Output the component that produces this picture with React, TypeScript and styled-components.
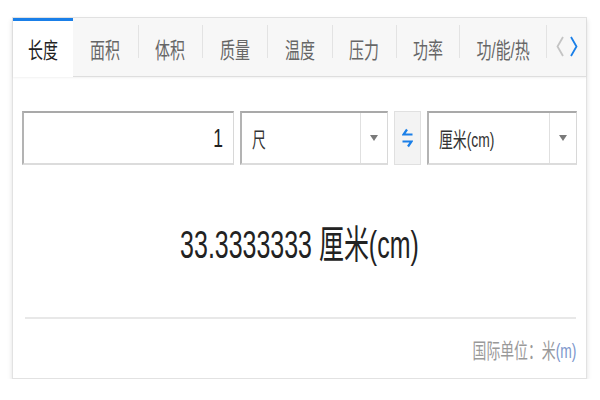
import { Fragment } from "react";
import styled, { createGlobalStyle } from "styled-components";

const GlobalStyle = createGlobalStyle`
    body {
        margin: 0;
        background: #fff;
        font-family: "Liberation Sans", "Noto Sans CJK SC", sans-serif;
    }
`;

const Page = styled.div`
    padding: 17px 0 0 12px;
`;

const Card = styled.div`
    width: 575px;
    height: 362px;
    box-sizing: border-box;
    border: 1px solid #e2e2e2;
    box-shadow: 0 3px 5px rgba(0, 0, 0, 0.12);
    display: flex;
    flex-direction: column;
    background: #fff;
`;

const TabBar = styled.div`
    display: flex;
    height: 61px;
    box-sizing: border-box;
    background: #f7f7f7;
    border-bottom: 1px solid #dedede;
    box-shadow: 0 1px 2px rgba(0, 0, 0, 0.06);
`;

const Tab = styled.div<{ $active?: boolean; $width: number }>`
    width: ${(p) => p.$width}px;
    flex-shrink: 0;
    box-sizing: border-box;
    display: flex;
    align-items: center;
    justify-content: center;
    padding-bottom: 2px;
    font-size: 22px;
    color: ${(p) => (p.$active ? "#222" : "#666")};
    background: ${(p) => (p.$active ? "#fff" : "transparent")};
    border-top: 3px solid ${(p) => (p.$active ? "#1a7fe8" : "transparent")};
    margin-bottom: ${(p) => (p.$active ? "-1px" : "0")};
`;

const Separator = styled.div`
    width: 1px;
    height: 33px;
    margin-top: 7px;
    background: #e3e3e3;
    flex-shrink: 0;
`;

const Arrows = styled.div`
    flex: 1;
    display: flex;
    align-items: center;
    justify-content: center;
    gap: 6px;
    padding-bottom: 2px;
`;

const Narrow = styled.span<{ $scale: number; $origin?: string }>`
    display: inline-block;
    white-space: nowrap;
    transform: scaleX(${(p) => p.$scale});
    transform-origin: ${(p) => p.$origin || "center"};
`;

const Body = styled.div`
    flex: 1;
    display: flex;
    flex-direction: column;
    padding: 34px 9px 0 9px;
`;

const Row = styled.div`
    display: flex;
    gap: 6px;
    height: 54px;
`;

const Field = styled.div<{ $width: number }>`
    width: ${(p) => p.$width}px;
    box-sizing: border-box;
    border-style: solid;
    border-width: 2px 1px 2px 2px;
    border-color: #a9a9a9 #d8d8d8 #dcdcdc #b3b3b3;
    display: flex;
    align-items: center;
    background: #fff;
`;

const NumberValue = styled.div`
    flex: 1;
    text-align: right;
    padding-right: 10px;
    font-size: 25px;
    color: #222;
`;

const SelectLabel = styled.div`
    flex: 1;
    padding-left: 10px;
    font-size: 21px;
    color: #333;
`;

const Caret = styled.div`
    width: 26px;
    align-self: stretch;
    border-left: 1px solid #e0e0e0;
    display: flex;
    align-items: center;
    justify-content: center;
    &::after {
        content: "";
        border-left: 4px solid transparent;
        border-right: 4px solid transparent;
        border-top: 6px solid #7a7a7a;
    }
`;

const SwapButton = styled.div`
    width: 27px;
    box-sizing: border-box;
    border: 1px solid #e0e0e0;
    background: #f3f3f3;
    display: flex;
    align-items: center;
    justify-content: center;
`;

const Result = styled.div`
    height: 152px;
    display: flex;
    align-items: center;
    justify-content: center;
    font-size: 39px;
    color: #222;
`;

const Divider = styled.div`
    height: 2px;
    margin: 0 1px 0 3px;
    background: #e8e8e8;
`;

const Footer = styled.div`
    height: 59px;
    display: flex;
    align-items: center;
    justify-content: flex-end;
    padding-right: 1px;
    font-size: 21px;
    color: #999;
`;

const Blue = styled.span`
    color: #7d97cc;
`;

const tabs = [
    { label: "面积", width: 64 },
    { label: "体积", width: 63 },
    { label: "质量", width: 64 },
    { label: "温度", width: 64 },
    { label: "压力", width: 63 },
    { label: "功率", width: 62 },
    { label: "功/能/热", width: 86 },
];

function SwapIcon() {
    return (
        <svg width="11" height="20" viewBox="0 0 11 20" fill="none" stroke="#1a7fe8" strokeWidth="2.2">
            <path d="M10.5 6.5H1.5L5 1.5" />
            <path d="M0.5 13.5H9.5L6 18.5" />
        </svg>
    );
}

function Chevron({ dir, color }: { dir: "left" | "right"; color: string }) {
    return (
        <svg width="8" height="21" viewBox="0 0 8 21" fill="none" stroke={color} strokeWidth="1.8">
            {dir === "left" ? <path d="M7 1L1.5 10.5L7 20" /> : <path d="M1 1L6.5 10.5L1 20" />}
        </svg>
    );
}

export default function App() {
    return (
        <Page>
            <GlobalStyle />
            <Card>
                <TabBar>
                    <Tab $active $width={60}>
                        <Narrow $scale={0.68}>长度</Narrow>
                    </Tab>
                    {tabs.map((t, i) => (
                        <Fragment key={t.label}>
                            {i > 0 && <Separator />}
                            <Tab $width={t.width + (i === 0 ? 1 : 0)}>
                                <Narrow $scale={0.68}>{t.label}</Narrow>
                            </Tab>
                        </Fragment>
                    ))}
                    <Separator />
                    <Arrows>
                        <Chevron dir="left" color="#c4c4c4" />
                        <Chevron dir="right" color="#1a7fe8" />
                    </Arrows>
                </TabBar>
                <Body>
                    <Row>
                        <Field $width={212}>
                            <NumberValue>
                                <Narrow $scale={0.7} $origin="right">1</Narrow>
                            </NumberValue>
                        </Field>
                        <Field $width={149}>
                            <SelectLabel>
                                <Narrow $scale={0.66} $origin="left">尺</Narrow>
                            </SelectLabel>
                            <Caret />
                        </Field>
                        <SwapButton>
                            <SwapIcon />
                        </SwapButton>
                        <Field $width={150}>
                            <SelectLabel>
                                <Narrow $scale={0.66} $origin="left">厘米(cm)</Narrow>
                            </SelectLabel>
                            <Caret />
                        </Field>
                    </Row>
                    <Result>
                        <Narrow $scale={0.64}>33.3333333 厘米(cm)</Narrow>
                    </Result>
                    <Divider />
                    <Footer>
                        <Narrow $scale={0.66} $origin="right">
                            国际单位：米<Blue>(m)</Blue>
                        </Narrow>
                    </Footer>
                </Body>
            </Card>
        </Page>
    );
}
